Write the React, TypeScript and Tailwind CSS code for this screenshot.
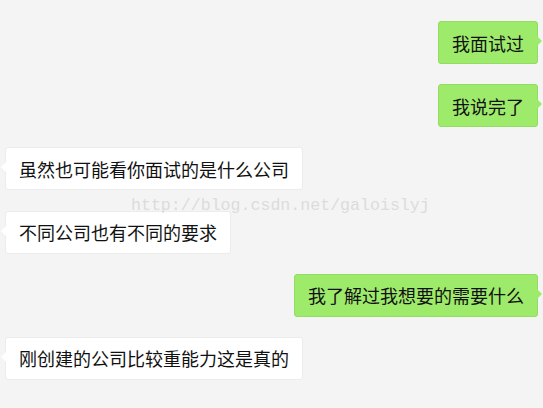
const messages = [
  { me: true, text: "我面试过" },
  { me: true, text: "我说完了" },
  { me: false, text: "虽然也可能看你面试的是什么公司" },
  { me: false, text: "不同公司也有不同的要求" },
  { me: true, text: "我了解过我想要的需要什么" },
  { me: false, text: "刚创建的公司比较重能力这是真的" },
];

const Bubble = ({ me, text }: { me: boolean; text: string }) => {
  return (
    <div className={me ? "flex justify-end pr-[5px]" : "flex justify-start pl-[5px]"}>
      <div
        className={
          me
            ? "relative h-[43px] rounded-[3px] bg-[#9eea6a] border border-[#93dc62] px-[13px] flex items-center"
            : "relative h-[43px] rounded-[3px] bg-white border border-[#ececec] px-[13px] flex items-center"
        }
      >
        <span className="text-[18px] leading-none text-[#111]">{text}</span>
        {me ? (
          <span className="absolute top-[14px] -right-[5px] w-0 h-0 border-y-[5px] border-y-transparent border-l-[5px] border-l-[#9eea6a]" />
        ) : (
          <span className="absolute top-[14px] -left-[5px] w-0 h-0 border-y-[5px] border-y-transparent border-r-[5px] border-r-white" />
        )}
      </div>
    </div>
  );
};

export default function App() {
  return (
    <div
      className="relative w-[543px] h-[408px] bg-[#f4f4f4] overflow-hidden"
      style={{ fontFamily: '"Noto Sans CJK SC", "Liberation Sans", sans-serif' }}
    >
      <div className="flex flex-col gap-[20.2px] pt-[21px]">
        {messages.map((m, i) => (
          <Bubble key={i} me={m.me} text={m.text} />
        ))}
      </div>
      <div
        className="absolute left-[131px] top-[198px] text-[16.6px] leading-none text-[#dcdcdc] pointer-events-none"
        style={{ fontFamily: '"Liberation Mono", monospace' }}
      >
        http://blog.csdn.net/galoislyj
      </div>
    </div>
  );
}
